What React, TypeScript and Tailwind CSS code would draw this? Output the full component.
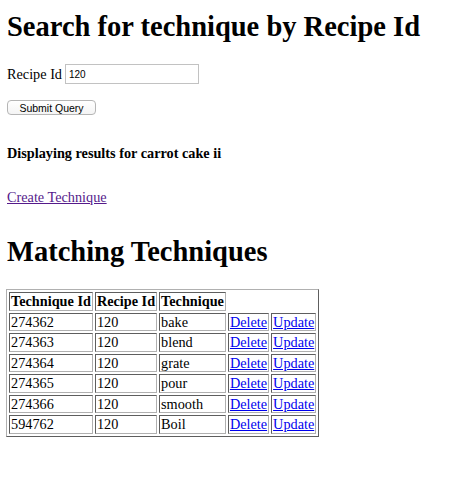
import React from "react";

const rows = [
  ["274362", "120", "bake"],
  ["274363", "120", "blend"],
  ["274364", "120", "grate"],
  ["274365", "120", "pour"],
  ["274366", "120", "smooth"],
  ["594762", "120", "Boil"],
];

const cell =
  "border border-solid border-t-[#5e5e5e] border-l-[#5e5e5e] border-b-[#b0b0b0] border-r-[#b0b0b0] px-[1px] py-[1px] leading-[14.5px] text-left whitespace-nowrap";

export default function App() {
  return (
    <div className="bg-white text-black min-h-[496px] w-[449px] pl-[7px] pt-[11px] flex flex-col items-start font-['Liberation_Serif',serif] text-[14.25px]">
      <h1 className="text-[28.5px] font-bold leading-[32px] m-0">
        Search for technique by Recipe Id
      </h1>
      <div className="mt-[21px] h-[20px] flex items-center gap-[3px]">
        <span className="leading-[16px]">Recipe Id</span>
        <div className="w-[134px] h-[20px] border border-solid border-[#c2c2c2] bg-white flex items-center pl-[3px] font-['Liberation_Sans',sans-serif] text-[10px]">
          120
        </div>
      </div>
      <button className="mt-[16px] w-[89px] h-[15px] rounded-[4px] border border-solid border-[#b5b5b5] bg-gradient-to-b from-white to-[#f4f4f4] flex items-center justify-center font-['Liberation_Sans',sans-serif] text-[10.5px] leading-[12px] text-black">
        Submit Query
      </button>
      <h4 className="mt-[30px] font-bold leading-[16px] m-0">
        Displaying results for carrot cake ii
      </h4>
      <a
        href="#"
        className="mt-[28px] leading-[16px] text-[#551A8B] underline"
      >
        Create Technique
      </a>
      <h1 className="mt-[31px] text-[28.5px] font-bold leading-[32px]">
        Matching Techniques
      </h1>
      <table className="mt-[21px] -ml-[1px] border-separate border-spacing-[2px] border border-solid border-t-[#b0b0b0] border-l-[#b0b0b0] border-b-[#5e5e5e] border-r-[#5e5e5e]">
        <thead>
          <tr>
            <th className={cell + " font-bold"}>Technique Id</th>
            <th className={cell + " font-bold"}>Recipe Id</th>
            <th className={cell + " font-bold"}>Technique</th>
          </tr>
        </thead>
        <tbody>
          {rows.map((r) => (
            <tr key={r[0]}>
              <td className={cell}>{r[0]}</td>
              <td className={cell}>{r[1]}</td>
              <td className={cell}>{r[2]}</td>
              <td className={cell}>
                <a href="#" className="text-[#0000EE] underline">
                  Delete
                </a>
              </td>
              <td className={cell}>
                <a href="#" className="text-[#0000EE] underline">
                  Update
                </a>
              </td>
            </tr>
          ))}
        </tbody>
      </table>
    </div>
  );
}
